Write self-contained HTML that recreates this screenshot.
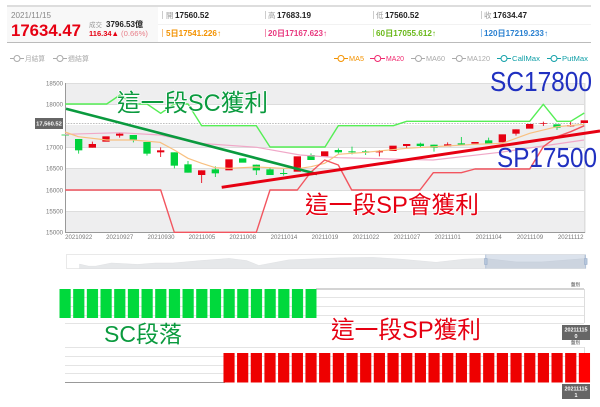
<!DOCTYPE html>
<html lang="zh-Hant">
<head>
<meta charset="utf-8">
<title>17634.47</title>
<style>
html,body{margin:0;padding:0;background:#fff;width:600px;height:407px;overflow:hidden}
svg{display:block;filter:blur(.3px)}
text{font-family:"Liberation Sans","Noto Sans CJK TC",sans-serif}
.g{fill:#999;font-size:7.5px}
.b{fill:#222;font-size:8px;font-weight:bold}
.axr{fill:#777;font-size:6.1px;text-anchor:end}
.dt{fill:#777;font-size:6.1px;text-anchor:middle}
.big{font-size:23.7px;paint-order:stroke;stroke:#fff;stroke-width:1.5px}
</style>
</head>
<body>
<svg width="600" height="407" viewBox="0 0 600 407" xmlns="http://www.w3.org/2000/svg">
<defs>
<pattern id="pg" patternUnits="userSpaceOnUse" x="59.5" y="0" width="13.67" height="407"><rect width="11.2" height="407" fill="#00d93c"/></pattern>
<pattern id="pr" patternUnits="userSpaceOnUse" x="223.4" y="0" width="13.67" height="407"><rect width="11.2" height="407" fill="#ee0000"/></pattern>
</defs>
<rect width="600" height="407" fill="#fff"/>

<!-- header -->
<rect x="7" y="5" width="584" height="2" fill="#ddd"/>
<rect x="7" y="7" width="151" height="35" fill="#f8f8f8"/>
<rect x="158" y="24" width="433" height="1" fill="#f2f2f2"/>
<rect x="7" y="42" width="584" height="1" fill="#bbb"/>
<text x="11" y="18" fill="#888" font-size="8" textLength="40" lengthAdjust="spacingAndGlyphs">2021/11/15</text>
<text x="11" y="36" fill="#e60012" font-size="17" font-weight="bold" textLength="70" lengthAdjust="spacingAndGlyphs">17634.47</text>
<text x="89" y="27" fill="#999" font-size="6.5">成交</text>
<text x="106" y="27" class="b" textLength="37" lengthAdjust="spacingAndGlyphs">3796.53億</text>
<text x="89" y="36" fill="#e60012" font-size="7.6" font-weight="bold" textLength="30" lengthAdjust="spacingAndGlyphs">116.34▲</text>
<text x="121" y="36" fill="#e8808a" font-size="7.6" textLength="27" lengthAdjust="spacingAndGlyphs">(0.66%)</text>

<rect x="162" y="11" width="1" height="8" fill="#ccc"/>
<rect x="265" y="11" width="1" height="8" fill="#ccc"/>
<rect x="373" y="11" width="1" height="8" fill="#ccc"/>
<rect x="481" y="11" width="1" height="8" fill="#ccc"/>
<rect x="162" y="29" width="1" height="8" fill="#f5c080"/>
<rect x="265" y="29" width="1" height="8" fill="#f090b0"/>
<rect x="373" y="29" width="1" height="8" fill="#b0dc80"/>
<rect x="481" y="29" width="1" height="8" fill="#90c0ee"/>

<text x="166" y="18" class="g">開</text><text x="175" y="18" class="b" textLength="34" lengthAdjust="spacingAndGlyphs">17560.52</text>
<text x="268" y="18" class="g">高</text><text x="277" y="18" class="b" textLength="34" lengthAdjust="spacingAndGlyphs">17683.19</text>
<text x="376" y="18" class="g">低</text><text x="385" y="18" class="b" textLength="34" lengthAdjust="spacingAndGlyphs">17560.52</text>
<text x="484" y="18" class="g">收</text><text x="493" y="18" class="b" textLength="34" lengthAdjust="spacingAndGlyphs">17634.47</text>

<text x="166" y="36" fill="#f39200" font-size="8" font-weight="bold" textLength="55" lengthAdjust="spacingAndGlyphs">5日17541.226↑</text>
<text x="268" y="36" fill="#e8387f" font-size="8" font-weight="bold" textLength="59" lengthAdjust="spacingAndGlyphs">20日17167.623↑</text>
<text x="376" y="36" fill="#6ab81a" font-size="8" font-weight="bold" textLength="60" lengthAdjust="spacingAndGlyphs">60日17055.612↑</text>
<text x="484" y="36" fill="#2a80d0" font-size="8" font-weight="bold" textLength="64" lengthAdjust="spacingAndGlyphs">120日17219.233↑</text>

<!-- legend -->
<g fill="#fff" stroke-width="1">
<path d="M10 58.5H24" stroke="#aaa"/><circle cx="17" cy="58.5" r="3" stroke="#aaa"/>
<path d="M53 58.5H67" stroke="#aaa"/><circle cx="60" cy="58.5" r="3" stroke="#aaa"/>
<path d="M334 58.5H348" stroke="#f39200"/><circle cx="341" cy="58.5" r="3" stroke="#f39200"/>
<path d="M370 58.5H385" stroke="#f0286e"/><circle cx="377.7" cy="58.5" r="3" stroke="#f0286e"/>
<path d="M411 58.5H425" stroke="#aaa"/><circle cx="418.5" cy="58.5" r="3" stroke="#aaa"/>
<path d="M452 58.5H466" stroke="#aaa"/><circle cx="459.3" cy="58.5" r="3" stroke="#aaa"/>
<path d="M497 58.5H511" stroke="#12a0a8"/><circle cx="504" cy="58.5" r="3" stroke="#12a0a8"/>
<path d="M547 58.5H561" stroke="#12a0a8"/><circle cx="554" cy="58.5" r="3" stroke="#12a0a8"/>
</g>
<g font-size="7.4">
<text x="25" y="61" fill="#aaa" font-size="6.8" textLength="20" lengthAdjust="spacingAndGlyphs">月結算</text>
<text x="68" y="61" fill="#aaa" font-size="6.8" textLength="21" lengthAdjust="spacingAndGlyphs">週結算</text>
<text x="349" y="61" fill="#f39200" textLength="15" lengthAdjust="spacingAndGlyphs">MA5</text>
<text x="386" y="61" fill="#f0286e" textLength="18" lengthAdjust="spacingAndGlyphs">MA20</text>
<text x="426" y="61" fill="#aaa" textLength="19" lengthAdjust="spacingAndGlyphs">MA60</text>
<text x="467" y="61" fill="#aaa" textLength="23" lengthAdjust="spacingAndGlyphs">MA120</text>
<text x="512" y="61" fill="#12a0a8" textLength="28" lengthAdjust="spacingAndGlyphs">CallMax</text>
<text x="562" y="61" fill="#12a0a8" textLength="26" lengthAdjust="spacingAndGlyphs">PutMax</text>
</g>

<!-- chart bands -->
<rect x="65" y="83" width="519" height="21" fill="#eeeeef"/>
<rect x="65" y="125" width="519" height="22" fill="#eeeeef"/>
<rect x="65" y="168" width="519" height="22" fill="#eeeeef"/>
<rect x="65" y="211" width="519" height="21" fill="#eeeeef"/>
<g fill="#ddd">
<rect x="65" y="83" width="519" height="1"/>
<rect x="65" y="104" width="519" height="1"/>
<rect x="65" y="147" width="519" height="1"/>
<rect x="65" y="168" width="519" height="1"/>
<rect x="65" y="190" width="519" height="1"/>
<rect x="65" y="211" width="519" height="1"/>
</g>
<rect x="584" y="83" width="1.5" height="150" fill="#ddd"/>
<rect x="65" y="83" width="1" height="150" fill="#999"/>
<rect x="65" y="232" width="520" height="1" fill="#999"/>
<path d="M65 123.5H584" stroke="#aaa" stroke-width=".7" stroke-dasharray="1.6 1.2"/>

<g>
<text x="63" y="85.5" class="axr">18500</text>
<text x="63" y="106.5" class="axr">18000</text>
<text x="63" y="149.5" class="axr">17000</text>
<text x="63" y="170.5" class="axr">16500</text>
<text x="63" y="192.5" class="axr">16000</text>
<text x="63" y="213.5" class="axr">15500</text>
<text x="63" y="234.5" class="axr">15000</text>
</g>
<rect x="35" y="118" width="28" height="11" fill="#666"/>
<text x="49" y="125.7" fill="#fff" font-size="5.8" font-weight="bold" text-anchor="middle">17,560.52</text>

<g>
<text x="78.7" y="239" class="dt">20210922</text>
<text x="119.7" y="239" class="dt">20210927</text>
<text x="161" y="239" class="dt">20210930</text>
<text x="202" y="239" class="dt">20211005</text>
<text x="242.7" y="239" class="dt">20211008</text>
<text x="284" y="239" class="dt">20211014</text>
<text x="325" y="239" class="dt">20211019</text>
<text x="366" y="239" class="dt">20211022</text>
<text x="407" y="239" class="dt">20211027</text>
<text x="447.7" y="239" class="dt">20211101</text>
<text x="488.7" y="239" class="dt">20211104</text>
<text x="530" y="239" class="dt">20211109</text>
<text x="570.7" y="239" class="dt">20211112</text>
</g>

<!-- candles -->
<path d="M61.5 135H69" stroke="#3ed85f" stroke-width="1"/>
<g transform="translate(0,95) scale(.33333)">
<path fill="none" stroke="#00d23c" stroke-width="2.5" d="M236 132V176M400 120V142M441 141V182M523 172V220M564 198V233M646 214V246M769 209V240M810 216V240M851 222V242"/>
<path fill="none" stroke="#e60012" stroke-width="2.5" d="M277 140V158M359 112V128M482 157V186M605 226V264"/>
<g fill="#00d23c">
<rect x="225" y="132" width="22" height="34"/><rect x="389" y="120" width="22" height="14"/>
<rect x="430" y="141" width="22" height="35"/><rect x="512" y="172" width="22" height="40"/>
<rect x="553" y="208" width="22" height="25"/><rect x="635" y="223" width="22" height="12"/>
<rect x="717" y="190" width="22" height="13"/><rect x="758" y="209" width="22" height="17"/>
<rect x="799" y="223" width="22" height="17"/><rect x="840" y="234" width="22" height="3"/>
</g>
<g fill="#e60012">
<rect x="266" y="147" width="22" height="11"/><rect x="307" y="124" width="22" height="16"/>
<rect x="348" y="116" width="22" height="6"/><rect x="471" y="166" width="22" height="6"/>
<rect x="594" y="226" width="22" height="14"/><rect x="676" y="193" width="22" height="33"/>
<rect x="881" y="184" width="22" height="46"/>
</g>
</g>
<g transform="translate(300,95) scale(.33333)">
<path fill="none" stroke="#00d23c" stroke-width="2.5" d="M33 175V195M115 160V176M156 155V178M197 165V180M361 143V158M402 149V170M484 126V149M566 128V147M771 88V105"/>
<path fill="none" stroke="#e60012" stroke-width="2.5" d="M238 165V184M320 147V160M443 142V154M648 103V122M730 80V93M812 78V95"/>
<g fill="#00d23c">
<rect x="22" y="180" width="22" height="15"/><rect x="104" y="165" width="22" height="7"/>
<rect x="145" y="169" width="22" height="3"/><rect x="186" y="169" width="22" height="4"/>
<rect x="350" y="146" width="22" height="7"/><rect x="391" y="149" width="22" height="9"/>
<rect x="473" y="145" width="22" height="4"/><rect x="555" y="136" width="22" height="11"/>
<rect x="760" y="88" width="22" height="10"/>
</g>
<g fill="#e60012">
<rect x="63" y="169" width="22" height="15"/><rect x="227" y="169" width="22" height="3"/>
<rect x="268" y="152" width="22" height="16"/><rect x="309" y="147" width="22" height="6"/>
<rect x="432" y="148" width="22" height="6"/><rect x="514" y="141" width="22" height="5"/>
<rect x="596" y="118" width="22" height="24"/><rect x="637" y="103" width="22" height="13"/>
<rect x="678" y="87" width="22" height="14"/><rect x="719" y="85" width="22" height="2"/>
<rect x="801" y="90" width="22" height="4"/><rect x="842" y="76" width="22" height="8"/>
</g>
</g>

<!-- moving averages and max lines -->
<g fill="none" stroke-linejoin="round">
<path stroke="#f0a8c8" stroke-width="1.2" d="M65 134.3L120 132.7L160 135L200 143.3L256.7 147.3L300 155L338.3 157.7L433 160L500 152.3L584 140"/>
<path stroke="#f8c080" stroke-width="1.2" d="M65 132L78.3 136.7L106.7 140L133 140L160 142.3L174.3 150L188 158.3L201.7 163.3L215.3 167.7L229 168.3L256 167L283.7 168.3L300 168.3L311 166.7L324.7 163.3L338.3 154.3L365.7 152.3L406.7 148.3L475 144.3L502.3 143.3L529.7 133.3L557 126.7L584.3 124.3"/>
<path stroke="#55ee55" stroke-width="1.4" d="M65.3 104H106.7L120 95L133.3 104H147L160.7 113.3L174.3 104H188L201.7 125.7H256.3L270 147H325L338.3 125.7H393.3L406.7 121.3H529.7L543.3 104.3L557 121.3H570.7L584.3 113"/>
<path stroke="#f2555f" stroke-width="1.4" d="M65.3 190H160.7L174.3 232.3H256.3L270 190H297.3L311 172L324.7 160L338.3 165L351.7 190H420L433.3 172.7H461.3L475 169H529.7L543.3 146.7L557 136.7L570.7 131.7L584.3 125.7"/>
</g>

<!-- annotation lines -->
<path d="M66 108.7L317 174" stroke="#0a9a3e" stroke-width="2.6" fill="none"/>
<path d="M221.7 187.3L600 131" stroke="#e60012" stroke-width="3" fill="none"/>

<!-- slider -->
<rect x="66.5" y="254.5" width="518" height="14" fill="#fff" stroke="#e4e4e4" stroke-width=".8"/>
<g transform="translate(50,250) scale(.351)">
<path fill="#e6e8ea" stroke="#d8dadc" d="M84 53V40L110 46L130 46L175 37L250 41L300 37L350 37L430 30L510 24L560 30L595 44L680 28L830 22L920 21L1000 26L1100 35L1180 26L1240 24L1330 34L1400 34L1527 24V53Z"/>
</g>
<rect x="486" y="254.5" width="100" height="14" fill="#a4b6d0" fill-opacity=".4"/>
<rect x="485.2" y="254.5" width="1" height="14" fill="#b4c4da"/>
<rect x="585" y="254.5" width="1" height="14" fill="#b4c4da"/>
<rect x="484.5" y="258.5" width="2.6" height="6" fill="#b6c6dc" stroke="#93a8c6" stroke-width=".5"/>
<rect x="584.5" y="258.5" width="2.6" height="6" fill="#b6c6dc" stroke="#93a8c6" stroke-width=".5"/>

<!-- bottom panels -->
<g fill="#e4e4e4">
<rect x="65" y="297" width="519" height="1"/>
<rect x="65" y="306" width="519" height="1"/>
<rect x="65" y="315" width="519" height="1"/>
<rect x="65" y="323" width="519" height="1"/>
<rect x="65" y="347" width="519" height="1"/>
<rect x="65" y="356" width="519" height="1"/>
<rect x="65" y="365" width="519" height="1"/>
<rect x="65" y="373" width="519" height="1"/>
</g>
<rect x="316" y="288.5" width="268" height="1" fill="#aaa"/>
<rect x="584" y="289" width="1" height="34" fill="#ddd"/>
<rect x="584" y="347" width="1" height="35" fill="#ddd"/>
<rect x="65" y="382" width="160" height="1" fill="#999"/>
<rect x="59.5" y="289" width="257" height="29" fill="url(#pg)"/>
<rect x="223.4" y="353" width="367" height="29.5" fill="url(#pr)"/>
<rect x="579" y="353" width="11" height="29.5" fill="#ff0000"/>

<text x="575.5" y="286" fill="#333" font-size="4.5" text-anchor="middle">盤別</text>
<text x="575.5" y="344" fill="#333" font-size="4.5" text-anchor="middle">盤別</text>
<rect x="562" y="325" width="28" height="15" fill="#666"/>
<text x="576" y="331.5" fill="#fff" font-size="5.4" font-weight="bold" text-anchor="middle">20211115</text>
<text x="576" y="337.8" fill="#fff" font-size="5.4" font-weight="bold" text-anchor="middle">0</text>
<rect x="562" y="384" width="28" height="15" fill="#666"/>
<text x="576" y="390.5" fill="#fff" font-size="5.4" font-weight="bold" text-anchor="middle">20211115</text>
<text x="576" y="396.8" fill="#fff" font-size="5.4" font-weight="bold" text-anchor="middle">1</text>

<!-- annotation text -->
<text x="117" y="111" class="big" fill="#0a9a3e" textLength="151" lengthAdjust="spacingAndGlyphs">這一段SC獲利</text>
<text x="490" y="91" fill="#2030c0" font-size="28" textLength="102" lengthAdjust="spacingAndGlyphs">SC17800</text>
<text x="497" y="167" fill="#2030c0" font-size="28" textLength="100" lengthAdjust="spacingAndGlyphs">SP17500</text>
<text x="305" y="213" class="big" fill="#e60012" textLength="174" lengthAdjust="spacingAndGlyphs">這一段SP會獲利</text>
<text x="104" y="342" fill="#0a9a3e" font-size="23" textLength="78" lengthAdjust="spacingAndGlyphs">SC段落</text>
<text x="331" y="338" fill="#e60012" font-size="23.7" textLength="150" lengthAdjust="spacingAndGlyphs">這一段SP獲利</text>
</svg>
</body>
</html>
